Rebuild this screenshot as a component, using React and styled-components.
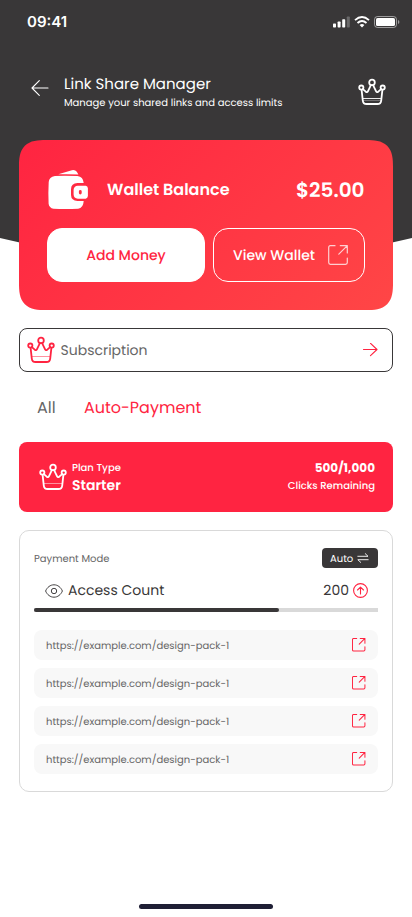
import React from "react";
import styled, { createGlobalStyle } from "styled-components";

const RED = "#ff2441";
const DARK = "#393738";
const GREY = "#666666";

const GlobalStyle = createGlobalStyle`
  * { box-sizing: border-box; }
  body {
    margin: 0;
    background: #fff;
    font-family: Poppins, "Open Sans", sans-serif;
    text-rendering: geometricPrecision;
  }
  svg { display: block; flex: none; }
  button { font-family: inherit; cursor: pointer; text-rendering: inherit; }
`;

const Screen = styled.div`
  display: grid;
  grid-template: 917px / 412px;
  overflow: hidden;
`;

const Backdrop = styled.div`
  grid-area: 1 / 1;
  height: 285px;
  background: ${DARK};
  clip-path: polygon(0 0, 100% 0, 100% 238px, 50% 285px, 0 238px);
`;

const Content = styled.div`
  grid-area: 1 / 1;
  display: flex;
  flex-direction: column;
  z-index: 1;
`;

const Text = styled.span`
  font-size: ${(p) => p.$size}px;
  font-weight: ${(p) => p.$weight || 400};
  line-height: 1.5;
  color: ${(p) => p.$color || "#fff"};
  white-space: nowrap;
`;

const StatusBar = styled.div`
  display: flex;
  align-items: center;
  justify-content: space-between;
  height: 44px;
  padding: 0 12px 0 27px;
`;

const Clock = styled.span`
  font: 600 15px/20px Inter, sans-serif;
  color: #fff;
`;

const StatusIcons = styled.div`
  display: flex;
  align-items: center;
  gap: 4px;
`;

const Header = styled.header`
  display: flex;
  align-items: center;
  height: 38px;
  margin-top: 28px;
  padding: 0 26px 0 30.5px;

  & > svg { margin-top: 2px; }
`;

const BackButton = styled.button`
  display: flex;
  padding: 0 0 7px;
  border: 0;
  background: none;
`;

const TitleBlock = styled.div`
  display: flex;
  flex-direction: column;
  flex: 1;
  margin-left: 15.5px;

  & > :first-child { margin: 1.75px 0 -1.75px; }
`;

const Column = styled.div`
  display: flex;
  flex-direction: column;
  align-items: ${(p) => p.$align || "flex-start"};
`;

const WalletCard = styled.section`
  height: 170px;
  margin: 30px 19px 0;
  padding: 29px 28px 28px;
  border-radius: 27px;
  corner-shape: superellipse(1.5);
  background: linear-gradient(135deg, #ff2441 0%, #ff4646 100%);
`;

const BalanceRow = styled.div`
  display: flex;
  align-items: center;
  height: 41px;
  padding-right: 0.5px;

  & > :nth-child(2) { flex: 1; margin-left: 19px; }
`;

const ButtonRow = styled.div`
  display: flex;
  gap: 8px;
  height: 54px;
  margin-top: 18px;
`;

const ActionButton = styled.button`
  display: flex;
  align-items: center;
  justify-content: center;
  gap: 13px;
  width: ${(p) => p.$width}px;
  padding: 0 0 0 ${(p) => (p.$filled ? 0 : 3)}px;
  border: 1px solid #fff;
  border-radius: 15px;
  background: ${(p) => (p.$filled ? "#fff" : "transparent")};
`;

const SubscriptionRow = styled.button`
  display: flex;
  align-items: center;
  height: 44px;
  margin: 18px 19px 0;
  padding: 0 14px 0 7px;
  border: 1px solid ${DARK};
  border-radius: 8px;
  background: #fff;
  text-align: left;

  & > :nth-child(2) { flex: 1; margin-left: 5.5px; }
`;

const Tabs = styled.nav`
  display: flex;
  gap: 28.3px;
  margin: 24px 0 0 37px;
`;

const PlanCard = styled.section`
  display: flex;
  align-items: center;
  height: 70px;
  margin: 22px 19px 0;
  padding: 0 18px 0 20px;
  border-radius: 8px;
  background: ${RED};
`;

const PlanName = styled(Column)`
  flex: 1;
  margin: 2px 0 0 5px;
`;

const PlanUsage = styled(Column)`
  margin-top: -1px;
`;

const DetailCard = styled.section`
  height: 262px;
  margin: 18px 19px 0;
  padding: 17px 14px;
  border: 1px solid #d9d9d9;
  border-radius: 10px;
`;

const ModeRow = styled.div`
  display: flex;
  align-items: center;
  justify-content: space-between;
  height: 20px;
`;

const ModePill = styled.button`
  display: flex;
  align-items: center;
  justify-content: space-between;
  width: 56px;
  height: 20px;
  padding: 0 9px 0 8px;
  border: 0;
  border-radius: 4px;
  background: ${DARK};
`;

const CountRow = styled.div`
  display: flex;
  align-items: center;
  height: 21px;
  margin-top: 12px;
  padding: 0 10px 0 11px;

  & > :nth-child(2) { flex: 1; margin-left: 5px; }
  & > :nth-child(3) { margin-right: 4px; }
`;

const Track = styled.div`
  height: 4px;
  margin-top: 7px;
  background: #d9d9d9;
`;

const Fill = styled.div`
  width: 245px;
  height: 4px;
  border-radius: 2px;
  background: ${DARK};
`;

const LinkList = styled.div`
  display: flex;
  flex-direction: column;
  gap: 8px;
  margin-top: 18px;
`;

const LinkRow = styled.div`
  display: flex;
  align-items: center;
  justify-content: space-between;
  height: 30px;
  padding: 0 12.5px 0 12px;
  border-radius: 8px;
  background: #f8f8f8;
`;

const HomeIndicator = styled.div`
  width: 134px;
  height: 5px;
  margin: auto auto 8px 139px;
  border-radius: 3px;
  background: #1f1f35;
`;

function Crown({ color, line = 0.5 }) {
  return (
    <svg width="28" height="28" viewBox="0 0 28 28" fill="none" stroke={color} strokeWidth="1.8" strokeLinecap="round" strokeLinejoin="round">
      <circle cx="14" cy="4.4" r="2.8" />
      <circle cx="3.3" cy="9.6" r="2.1" />
      <circle cx="24.7" cy="9.6" r="2.1" />
      <path d="M3.6 11.8 4.8 22.6Q5.1 26 8.6 26H19.4Q22.9 26 23.2 22.6L24.4 11.8" />
      <path d="M4.9 11.1 8 13.9Q9.2 14.7 9.9 13.3L12.9 7.1M15.1 7.1 18.1 13.3Q18.8 14.7 20 13.9L23.1 11.1" />
      <path d="M5 20.5H23" strokeWidth={line} />
      {line > 0.6 && <path d="M5 22.5H23" strokeWidth="0.3" />}
    </svg>
  );
}

function ExternalLink({ size, color, weight, opacity = 1 }) {
  return (
    <svg width={size} height={size} viewBox="0 0 20 20" fill="none" stroke={color} strokeOpacity={opacity} strokeWidth={weight} strokeLinecap="round" strokeLinejoin="round">
      <path d="M7 .7H2.4Q.7.7.7 2.4V17.6Q.7 19.3 2.4 19.3H17.6Q19.3 19.3 19.3 17.6V13" />
      <path d="M12.3.7H19.3V8M19.3.7 10.8 9.2" />
    </svg>
  );
}

function Wallet() {
  return (
    <svg width="41" height="41" viewBox="-.5 -.5 41 41" fill="#fff">
      <path d="M10.8 4.8 24.4.7Q27.6 0 29.3 2.3L30.9 5Q21 4.4 10.8 4.8Z" />
      <path d="M7.4 6.5Q17.5 5.9 30 6.6 35.6 7.3 36.2 13.6H30Q23.6 13.9 23.5 19.8V25.5Q23.7 31.2 30 31.5H36.2Q35.8 38.6 30.6 39.2 17.5 40 6 39.2 1.7 38.4 1.1 34.2.6 23 1.2 12.4 1.6 7.5 7.4 6.5Z" />
      <path fillRule="evenodd" d="M30.3 16.2H38.2Q40.2 16.5 40.4 18.8V26.6Q40.2 28.9 38.2 29.2H30.3Q26.3 28.9 26.1 25.1V20.3Q26.3 16.5 30.3 16.2ZM32.8 20.6Q31.5 20.7 31.4 21.8V23.6Q31.5 24.8 32.8 24.9 34.1 24.8 34.2 23.6V21.8Q34.1 20.7 32.8 20.6Z" />
    </svg>
  );
}

function Arrow({ width, height, color, back }) {
  return (
    <svg width={width} height={height} viewBox={`0 0 ${width} ${height}`} fill="none" stroke={color} strokeWidth="1.1" strokeLinecap="round" strokeLinejoin="round">
      {back ? <path d="M17 8H1M8.3.7 1 8 8.3 15.3" /> : <path d="M.5 6.5H14M7.5.3 14 6.5 7.5 12.7" />}
    </svg>
  );
}

function Signal() {
  return (
    <svg width="17" height="12" viewBox="0 0 17 12" fill="#fff">
      <rect y="7.5" width="3" height="4" rx=".7" />
      <rect x="4.6" y="5.5" width="3" height="6" rx=".7" />
      <rect x="9.2" y="3.2" width="3" height="8.3" rx=".7" />
      <rect x="13.8" y=".5" width="3" height="11" rx=".7" opacity=".25" />
    </svg>
  );
}

function Wifi() {
  return (
    <svg width="16" height="12" viewBox="0 0 16 12" fill="none" stroke="#fff" strokeWidth="1.9">
      <path d="M1 4.1Q8-2 15 4.1M3.5 6.9Q8 3.1 12.5 6.9" />
      <path d="M5.6 8.9Q8 7.1 10.4 8.9L8 11.4Z" fill="#fff" stroke="none" />
    </svg>
  );
}

function Battery() {
  return (
    <svg width="26" height="12" viewBox="0 0 26 12" fill="#fff">
      <rect x=".5" y=".5" width="22" height="11" rx="3" fill="none" stroke="#fff" strokeOpacity=".5" />
      <rect x="2" y="2" width="19" height="8" rx="1.6" />
      <path d="M24 4V8Q25.4 7.4 25.4 6T24 4Z" opacity=".5" />
    </svg>
  );
}

function Eye() {
  return (
    <svg width="18" height="14" viewBox="0 0 18 14" fill="none" stroke={DARK} strokeWidth=".95">
      <path d="M.6 7C2.2 3.3 5.2.8 9 .8S15.8 3.3 17.4 7C15.8 10.7 12.8 13.2 9 13.2S2.2 10.7.6 7Z" />
      <circle cx="9" cy="7" r="2.7" />
    </svg>
  );
}

function Swap() {
  return (
    <svg width="12" height="10" viewBox="0 0 12 10" fill="none" stroke="#fff" strokeWidth=".9" strokeLinecap="round" strokeLinejoin="round">
      <path d="M.8 3.3H11L8.2.6M11.2 6.7H.8L3.7 9.4" />
    </svg>
  );
}

function UpCircle() {
  return (
    <svg width="15" height="15" viewBox="0 0 15 15" fill="none" stroke={RED} strokeWidth="1.1" strokeLinecap="round" strokeLinejoin="round">
      <circle cx="7.5" cy="7.5" r="6.9" />
      <path d="M7.5 11V4.2M4.5 7 7.5 4.1 10.5 7" />
    </svg>
  );
}

const links = Array(4).fill("https://example.com/design-pack-1");

export default function App() {
  return (
    <Screen>
      <GlobalStyle />
      <Backdrop />
      <Content>
        <StatusBar>
          <Clock>09:41</Clock>
          <StatusIcons><Signal /><Wifi /><Battery /></StatusIcons>
        </StatusBar>
        <Header>
          <BackButton aria-label="Back"><Arrow back width={18} height={16} color="#fff" /></BackButton>
          <TitleBlock>
            <Text $size={15}>Link Share Manager</Text>
            <Text $size={10}>Manage your shared links and access limits</Text>
          </TitleBlock>
          <Crown color="#fff" line={0.9} />
        </Header>
        <WalletCard>
          <BalanceRow>
            <Wallet />
            <Text $size={16} $weight={600}>Wallet Balance</Text>
            <Text $size={20} $weight={600}>$25.00</Text>
          </BalanceRow>
          <ButtonRow>
            <ActionButton $filled $width={158}>
              <Text $size={14} $weight={500} $color={RED}>Add Money</Text>
            </ActionButton>
            <ActionButton $width={152}>
              <Text $size={14} $weight={500}>View Wallet</Text>
              <ExternalLink size={20} color="#fff" weight={1.2} opacity={0.75} />
            </ActionButton>
          </ButtonRow>
        </WalletCard>
        <SubscriptionRow>
          <Crown color={RED} />
          <Text $size={14} $color={GREY}>Subscription</Text>
          <Arrow width={15} height={14} color={RED} />
        </SubscriptionRow>
        <Tabs>
          <Text $size={16} $color={GREY}>All</Text>
          <Text $size={16} $color={RED}>Auto-Payment</Text>
        </Tabs>
        <PlanCard>
          <Crown color="#fff" />
          <PlanName>
            <Text $size={10} $weight={500}>Plan Type</Text>
            <Text $size={14} $weight={600}>Starter</Text>
          </PlanName>
          <PlanUsage $align="flex-end">
            <Text $size={12} $weight={700}>500/1,000</Text>
            <Text $size={10} $weight={500}>Clicks Remaining</Text>
          </PlanUsage>
        </PlanCard>
        <DetailCard>
          <ModeRow>
            <Text $size={10} $color={GREY}>Payment Mode</Text>
            <ModePill><Text $size={10}>Auto</Text><Swap /></ModePill>
          </ModeRow>
          <CountRow>
            <Eye />
            <Text $size={14} $color={DARK}>Access Count</Text>
            <Text $size={14} $color={DARK}>200</Text>
            <UpCircle />
          </CountRow>
          <Track><Fill /></Track>
          <LinkList>
            {links.map((url, i) => (
              <LinkRow key={i}>
                <Text $size={10} $color={GREY}>{url}</Text>
                <ExternalLink size={13.4} color={RED} weight={1.5} />
              </LinkRow>
            ))}
          </LinkList>
        </DetailCard>
        <HomeIndicator />
      </Content>
    </Screen>
  );
}
